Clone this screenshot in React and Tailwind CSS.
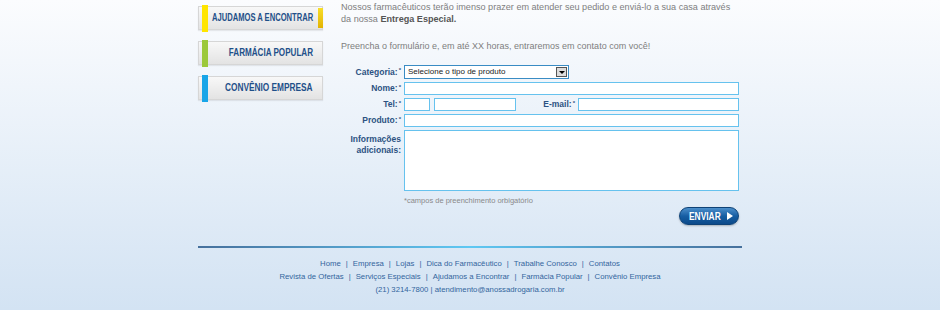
const inputCls = "h-[13px] border border-[#66c2ee] bg-white";

function MenuBtn({ label, bar, active, scale }) {
  return (
    <div className="relative flex h-[24px] items-center justify-end border border-[#d6d6d6] bg-linear-to-b from-[#f8f8f8] to-[#e3e3e3] pr-[9px] shadow-[0_1px_1px_rgba(0,0,0,0.07)]">
      <div className={`absolute left-[3px] -top-[2px] -bottom-[3px] w-[6px] ${bar}`} />
      {active && (
        <div className="absolute -right-[1px] top-[1px] bottom-[1px] w-[5px] bg-linear-to-b from-[#f7de27] to-[#e3b300]" />
      )}
      <span className={`inline-block origin-right ${scale} whitespace-nowrap text-[10px] font-bold leading-none text-[#1f5089]`}>
        {label}
      </span>
    </div>
  );
}

function Label({ children }) {
  return (
    <div className="flex h-[13px] items-center justify-end whitespace-nowrap text-[8.5px] font-bold text-[#2c5282]">
      {children}
      <span className="ml-[1px] self-start pt-[2px] text-[6px] leading-none">*</span>
    </div>
  );
}

function Sep() {
  return <span className="mx-[5px]">|</span>;
}

export default function App() {
  return (
    <div className="h-[310px] w-full overflow-hidden bg-linear-to-b from-[#fbfcfe] to-[#d3e3f3] font-['Liberation_Sans',Arial,sans-serif]">
      <div className="mx-auto w-[544px]">
        <div className="flex">
          <div className="flex w-[125px] shrink-0 flex-col gap-[11px] pt-[6px]">
            <MenuBtn label="AJUDAMOS A ENCONTRAR" bar="bg-[#ffe500]" scale="scale-x-[0.76]" active />
            <MenuBtn label="FARMÁCIA POPULAR" bar="bg-[#9cc93a]" scale="scale-x-[0.81]" />
            <MenuBtn label="CONVÊNIO EMPRESA" bar="bg-[#18a5e8]" scale="scale-x-[0.83]" />
          </div>
          <div className="ml-[18px] flex-1">
            <p className="mt-[1px] text-[9.1px] leading-[12px] text-[#7e7e7e]">
              Nossos farmacêuticos terão imenso prazer em atender seu pedido e enviá-lo a sua casa através
              <br />
              da nossa <b className="text-[#555]">Entrega Especial.</b>
            </p>
            <p className="mt-[15px] text-[9px] leading-[12px] text-[#7e7e7e]">
              Preencha o formulário e, em até XX horas, entraremos em contato com você!
            </p>

            <div className="mt-[13px] grid grid-cols-[60px_335px] gap-x-[3px] gap-y-[3px]">
              <div className="flex h-[14px] items-center justify-end whitespace-nowrap text-[8.5px] font-bold text-[#2c5282]">
                Categoria:<span className="ml-[1px] self-start pt-[2px] text-[6px] leading-none">*</span>
              </div>
              <div className="flex h-[14px] w-[165px] items-center border border-[#3a8cc4] bg-white">
                <span className="flex-1 pl-[3px] text-[8px] leading-none text-[#222]">Selecione o tipo de produto</span>
                <span className="mr-[1px] flex h-[10px] w-[11px] items-center justify-center border border-[#555] bg-[#dcdcdc]">
                  <span className="h-0 w-0 border-x-[3px] border-t-[3px] border-x-transparent border-t-black" />
                </span>
              </div>

              <Label>Nome:</Label>
              <div className={inputCls} />

              <Label>Tel:</Label>
              <div className="flex h-[13px]">
                <div className={`${inputCls} w-[26px]`} />
                <div className={`${inputCls} ml-[4px] w-[82px]`} />
                <div className="flex flex-1 items-center justify-end pr-[3px] text-[8.5px] font-bold text-[#2c5282]">
                  E-mail:<span className="ml-[1px] self-start pt-[2px] text-[6px] leading-none">*</span>
                </div>
                <div className={`${inputCls} w-[161px]`} />
              </div>

              <Label>Produto:</Label>
              <div className={inputCls} />

              <div className="pt-[4px] text-right text-[8.5px] font-bold leading-[11px] text-[#2c5282]">
                Informações
                <br />
                adicionais:
              </div>
              <div className="h-[61px] border border-[#66c2ee] bg-white" />

              <div />
              <div>
                <div className="mt-[2px] text-[7.5px] leading-[10px] text-[#8a8a8a]">
                  *campos de preenchimento orbigatório
                </div>
                <div className="mt-[1px] flex justify-end">
                  <div className="flex h-[18px] w-[60px] items-center justify-center rounded-full border border-[#0d4277] bg-linear-to-b from-[#4b8fcb] via-[#165ea3] to-[#0b4a8a] shadow-[0_1px_2px_rgba(0,0,0,0.25)]">
                    <span className="inline-block scale-x-[0.8] text-[10.5px] font-bold leading-none text-white">ENVIAR</span>
                    <span className="ml-[3px] h-0 w-0 border-y-[4px] border-l-[6px] border-y-transparent border-l-white" />
                  </div>
                </div>
              </div>
            </div>
          </div>
        </div>

        <div className="mt-[21px] h-[2px] bg-linear-to-r from-[#46709c] via-[#5ec8f3] to-[#46709c]" />
        <div className="pt-[9px] text-center text-[7.75px] leading-[13px] text-[#33659d]">
          <div>
            Home<Sep />Empresa<Sep />Lojas<Sep />Dica do Farmacêutico<Sep />Trabalhe Conosco<Sep />Contatos
          </div>
          <div>
            Revista de Ofertas<Sep />Serviços Especiais<Sep />Ajudamos a Encontrar<Sep />Farmácia Popular<Sep />Convênio Empresa
          </div>
          <div>(21) 3214-7800 | atendimento@anossadrogaria.com.br</div>
        </div>
      </div>
    </div>
  );
}
